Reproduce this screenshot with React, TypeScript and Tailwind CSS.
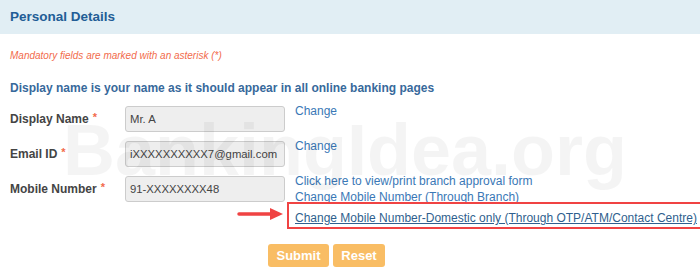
export default function App() {
  return (
    <div className="relative w-[700px] h-[280px] overflow-hidden bg-white font-['Liberation_Sans',Arial,sans-serif]">
      {/* Header */}
      <div className="h-[34px] bg-[#e1eef4] px-[10px] flex items-center">
        <span className="text-[13.5px] font-bold text-[#225d96]">Personal Details</span>
      </div>

      <div className="px-[10px] pt-[15px]">
        <p className="text-[10px] leading-[13px] italic text-[#f26b4c]">
          Mandatory fields are marked with an asterisk (*)
        </p>
        <p className="mt-[18px] text-[12px] leading-[16px] font-bold text-[#37699b]">
          Display name is your name as it should appear in all online banking pages
        </p>

        <div className="mt-[10px] flex flex-col gap-[9px]">
          {/* Display Name */}
          <div className="flex items-start">
            <Label text="Display Name" />
            <Field value="Mr. A" />
            <div className="ml-[10px] -mt-[3px] flex flex-col">
              <a className="text-[12px] leading-[16px] text-[#3a78b6]">Change</a>
            </div>
          </div>

          {/* Email */}
          <div className="flex items-start">
            <Label text="Email ID" />
            <Field value="iXXXXXXXXXX7@gmail.com" />
            <div className="ml-[10px] -mt-[3px] flex flex-col">
              <a className="text-[12px] leading-[16px] text-[#3a78b6]">Change</a>
            </div>
          </div>

          {/* Mobile */}
          <div className="flex items-start">
            <Label text="Mobile Number" />
            <Field value="91-XXXXXXXX48" />
            <div className="ml-[10px] -mt-[3px] flex flex-col items-start whitespace-nowrap">
              <a className="text-[12px] leading-[16px] text-[#3a78b6]">
                Click here to view/print branch approval form
              </a>
              <a className="text-[12px] leading-[16px] text-[#3a78b6]">
                Change Mobile Number (Through Branch)
              </a>
              <div className="relative -ml-[8px] -mt-[3px] h-[27px] border-2 border-[#f04343] pl-[6px] pr-[3px] pt-[1px]">
                <a className="text-[12px] leading-[16px] text-[#2f5f8e] underline">
                  Change Mobile Number-Domestic only (Through OTP/ATM/Contact Centre)
                </a>
                {/* annotation arrow */}
                <svg
                  className="absolute right-full top-[3px] mr-[4px]"
                  width="48"
                  height="14"
                  viewBox="0 0 48 14"
                >
                  <line x1="2" y1="7" x2="36" y2="7" stroke="#f04343" strokeWidth="3.5" strokeLinecap="round" />
                  <polygon points="33,1 46,7 33,13" fill="#f04343" />
                </svg>
              </div>
            </div>
          </div>
        </div>

        <div className="mt-[15px] ml-[258px] flex gap-[4px]">
          <button className="w-[61px] h-[23px] rounded-[3px] bg-[#f9bd64] text-white text-[13px] font-bold">
            Submit
          </button>
          <button className="w-[52px] h-[23px] rounded-[3px] bg-[#f9bd64] text-white text-[13px] font-bold">
            Reset
          </button>
        </div>
      </div>

      {/* Watermark */}
      <div className="pointer-events-none absolute left-[63px] top-[114px] text-[72px] leading-none font-bold text-black/[0.045] whitespace-nowrap">
        BankingIdea.org
      </div>
    </div>
  )
}

function Label({ text }: { text: string }) {
  return (
    <div className="w-[115px] shrink-0 h-[26px] flex items-center text-[12px] font-bold text-[#444444]">
      {text}
      <span className="ml-[4px] -mt-[4px] text-[11px] text-[#f26b4c]">*</span>
    </div>
  )
}

function Field({ value }: { value: string }) {
  return (
    <div className="w-[160px] shrink-0 h-[26px] flex items-center px-[4px] rounded-[3px] border border-[#cccccc] bg-[#eeeeee] text-[11.3px] text-[#444444] whitespace-nowrap">
      {value}
    </div>
  )
}
